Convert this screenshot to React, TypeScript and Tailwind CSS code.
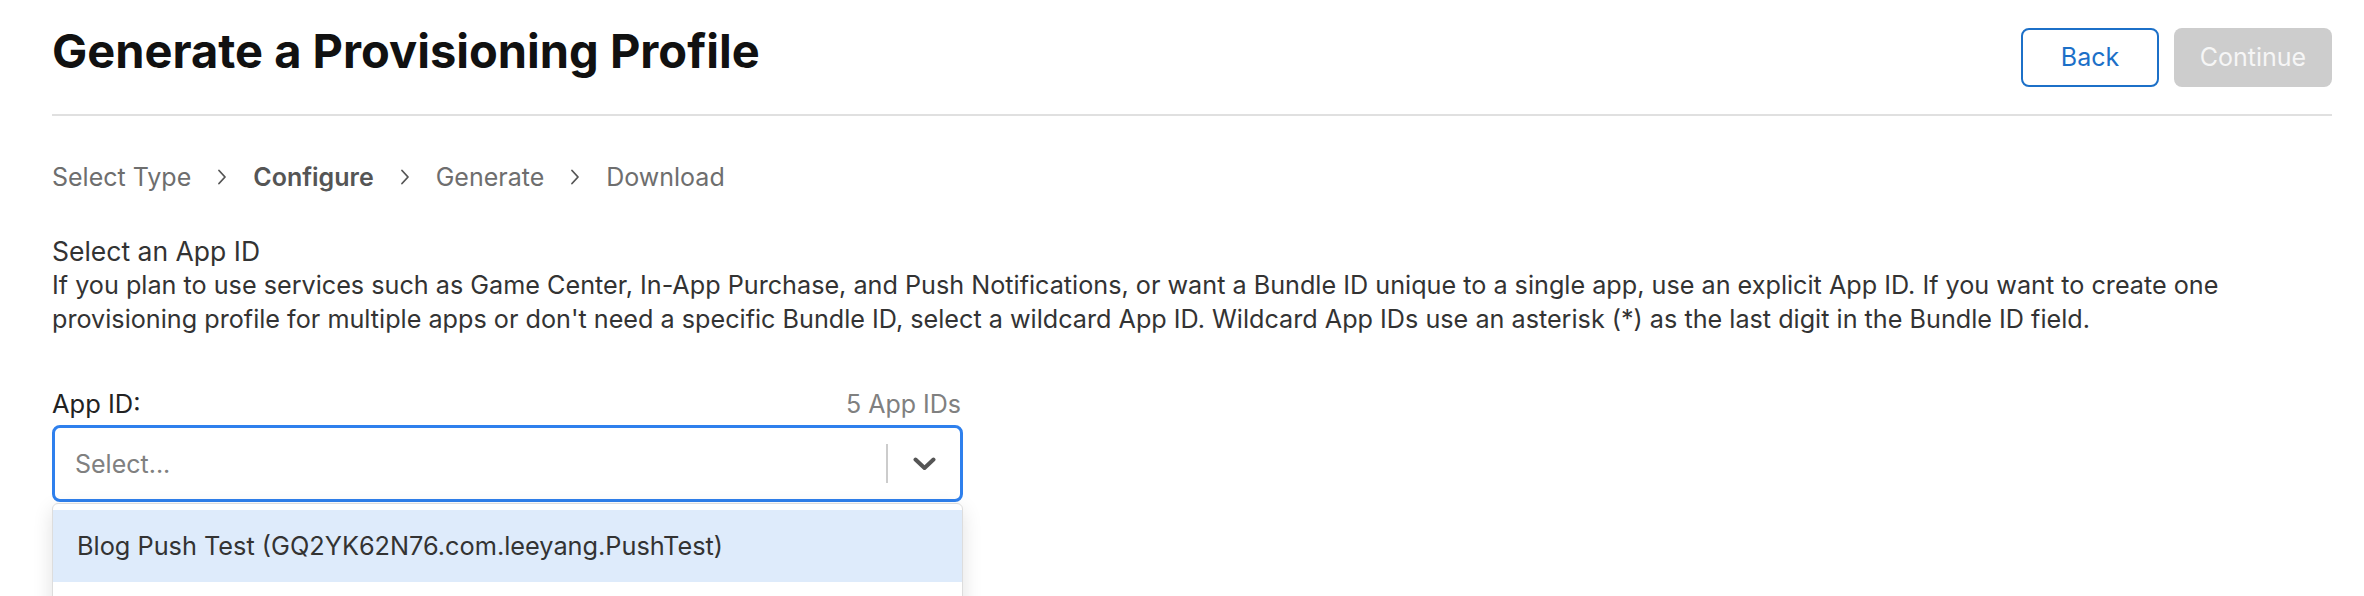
const steps = [
  { label: 'Select Type', active: false },
  { label: 'Configure', active: true },
  { label: 'Generate', active: false },
  { label: 'Download', active: false },
]

const appIds = ['Blog Push Test (GQ2YK62N76.com.leeyang.PushTest)']

function StepArrow() {
  return (
    <svg width="10" height="16" viewBox="0 0 10 16" fill="none" className="shrink-0">
      <path d="M2 1.5 L8 8 L2 14.5" stroke="#555" strokeWidth="1.8" strokeLinecap="round" strokeLinejoin="round" />
    </svg>
  )
}

function SelectChevron() {
  return (
    <svg width="23" height="14" viewBox="0 0 23 14" fill="none">
      <path d="M2.5 2.5 L11.5 11 L20.5 2.5" stroke="#555" strokeWidth="4" strokeLinecap="round" strokeLinejoin="round" />
    </svg>
  )
}

export default function App() {
  return (
    <div className="min-h-screen bg-white pl-[52px] pr-[32px] font-['Inter','Liberation_Sans',sans-serif] text-[#333]">
      {/* header */}
      <div className="flex h-[116px] items-start justify-between border-b-2 border-[#e0e0e0]">
        <h1 className="pt-[27px] text-[47px] font-bold leading-none text-[#111]">
          Generate a Provisioning Profile
        </h1>
        <div className="mt-[28px] flex gap-[15px]">
          <button className="h-[59px] w-[138px] rounded-[8px] border-2 border-[#1c70c8] text-[25px] text-[#1c70c8]">
            Back
          </button>
          <button disabled className="h-[59px] w-[158px] rounded-[8px] bg-[#cdcdcd] text-[25px] text-[#f6f6f6]">
            Continue
          </button>
        </div>
      </div>

      {/* steps */}
      <div className="mt-[45px] flex items-center gap-[26px] text-[25px] leading-[32px]">
        {steps.map((step, i) => (
          <div key={step.label} className="flex items-center gap-[26px]">
            {i > 0 && <StepArrow />}
            <span className={step.active ? 'font-semibold text-[#555]' : 'text-[#6e6e6e]'}>{step.label}</span>
          </div>
        ))}
      </div>

      {/* description */}
      <div className="mt-[41px] text-[25.2px] leading-[34px] text-[#333]">
        <p className="text-[26.5px]">Select an App ID</p>
        <p>
          If you plan to use services such as Game Center, In-App Purchase, and Push Notifications, or want a Bundle ID
          unique to a single app, use an explicit App ID. If you want to create one provisioning profile for multiple
          apps or don't need a specific Bundle ID, select a wildcard App ID. Wildcard App IDs use an asterisk (*) as the
          last digit in the Bundle ID field.
        </p>
      </div>

      {/* select */}
      <div className="mt-[51px] w-[911px]">
        <div className="flex items-end justify-between leading-[34px]">
          <span className="text-[25.5px] text-[#222]">App ID:</span>
          <span className="pr-[2px] text-[25px] text-[#808080]">5 App IDs</span>
        </div>
        <div className="relative mt-[4px]">
          <div className="flex h-[77px] items-center rounded-[8px] border-[3px] border-[#2f80ed] bg-white">
            <span className="flex-1 pl-[20px] pt-[2px] text-[25px] text-[#808080]">Select...</span>
            <span className="h-[39px] w-[2px] bg-[#cccccc]" />
            <span className="flex w-[72px] items-center justify-center">
              <SelectChevron />
            </span>
          </div>
          <div className="absolute left-0 right-0 top-full mt-[1px] rounded-[6px] border border-[#dddddd] bg-white pt-[6px] shadow-[0_6px_20px_rgba(0,0,0,0.12)]">
            {appIds.map((id, i) => (
              <div
                key={id}
                className={`flex h-[72px] items-center pl-[24px] text-[25.3px] text-[#333] ${i === 0 ? 'bg-[#deebfb]' : ''}`}
              >
                {id}
              </div>
            ))}
            <div className="h-[72px]" />
          </div>
        </div>
      </div>
    </div>
  )
}
